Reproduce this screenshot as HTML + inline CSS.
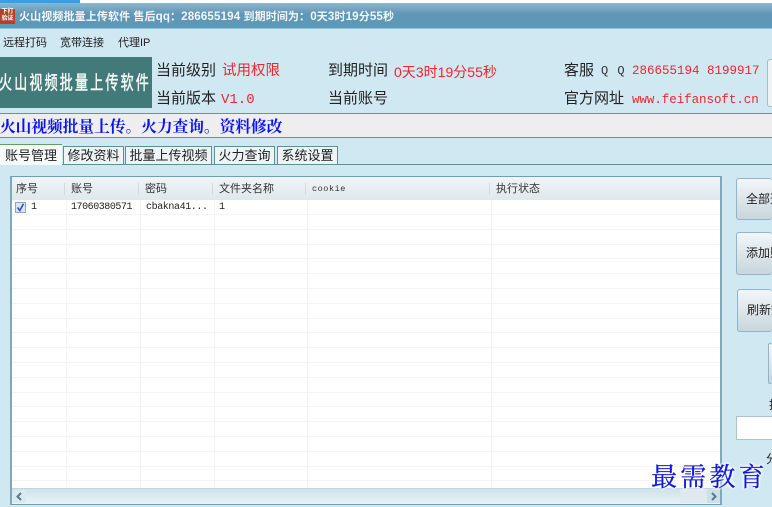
<!DOCTYPE html>
<html><head><meta charset="utf-8">
<style>
html,body{margin:0;padding:0}
body{width:772px;height:507px;overflow:hidden;position:relative;background:#d0e8f2;font-family:"Liberation Sans","Noto Sans CJK SC",sans-serif;color:#222}
div{position:absolute;box-sizing:border-box;white-space:nowrap}
.s{font-family:"Liberation Mono","Noto Serif CJK SC",monospace}
.l{font-size:15px;line-height:18px;color:#222}
.m{font-size:11px;line-height:14px;color:#222}
.r{color:#f0242c}
.h{font-size:11px;line-height:14px;color:#333;top:182px}
.tab{top:146px;height:18px;background:#eef3f3;border:1px solid #5f8f94;border-bottom:none;font-size:13px;line-height:17px;text-align:center;color:#222}
.btn{background:linear-gradient(#f2f6f8,#c8d6dd);border:1px solid #8fb5c8;border-radius:3px;font-size:12px;line-height:40px;overflow:hidden;color:#222;border-right:none;padding-left:9px}
.hl{left:12px;width:708px;height:1px;background:#f3f4f4}
.vl{top:200px;width:1px;height:288px;background:#f3f4f4}
</style></head><body>
<div style="left:0;top:0;width:772px;height:3px;background:#fff"></div>
<div style="left:0;top:0;width:80px;height:3px;background:#3a9fe0"></div>
<div style="left:0;top:3px;width:772px;height:26px;background:linear-gradient(#8db5cc,#5f97b7 45%,#5f97b7);border-bottom:1px solid #8cc8dc"></div>
<div style="left:0;top:9px;width:15px;height:15px;background:#b5402a;color:#fff;font-size:6px;line-height:7px;text-align:center;font-weight:bold;white-space:normal">下打<br>验证</div>
<div style="left:19px;top:9px;font-size:11px;line-height:15px;font-weight:bold;color:#f2f6f8;letter-spacing:.12px">火山视频批量上传软件 售后<span style="font-size:11.6px">qq</span>：<span style="font-size:11.6px">286655194</span> 到期时间为：<span style="font-size:11.6px">0</span>天<span style="font-size:11.6px">3</span>时<span style="font-size:11.6px">19</span>分<span style="font-size:11.6px">55</span>秒</div>

<div class="m" style="left:3px;top:36px">远程打码</div>
<div class="m" style="left:60px;top:36px">宽带连接</div>
<div class="m" style="left:118px;top:36px">代理IP</div>

<div style="left:0;top:57px;width:152px;height:51px;background:#417a78;overflow:hidden"></div>
<div style="left:-1px;top:74px;width:153px;color:#f4f8f6;font-size:13px;line-height:18px;letter-spacing:2.2px;-webkit-text-stroke:.35px #f4f8f6;transform:scaleY(1.45);overflow:hidden">火山视频批量上传软件</div>

<div class="l" style="left:156px;top:62px">当前级别</div>
<div class="l r" style="left:222px;top:62px;font-size:14.5px">试用权限</div>
<div class="l" style="left:156px;top:90px">当前版本</div>
<div class="s r" style="left:221px;top:91px;font-size:14px;line-height:18px">V1.0</div>
<div class="l" style="left:328px;top:62px">到期时间</div>
<div class="r" style="left:394px;top:63px;font-size:14px;line-height:18px;letter-spacing:.02px">0天3时19分55秒</div>
<div class="l" style="left:328px;top:90px">当前账号</div>
<div class="l" style="left:564px;top:62px">客服</div>
<div class="s" style="left:601px;top:62px;font-size:12px;line-height:18px;color:#333;letter-spacing:1px">Q Q</div>
<div class="s r" style="left:632px;top:62px;font-size:12.5px;line-height:18px">286655194 8199917</div>
<div class="l" style="left:564px;top:90px">官方网址</div>
<div class="s r" style="left:632px;top:91px;font-size:12.5px;line-height:18px;letter-spacing:-.05px">www.feifansoft.cn</div>
<div style="left:767px;top:59px;width:6px;height:48px;background:#eef3f5;border:1px solid #a9bcc5;border-right:none;border-radius:3px 0 0 3px"></div>

<div style="left:0;top:113px;width:772px;height:25px;background:#eeeeee;border-top:1px solid #7c8a8c;border-bottom:1px solid #7c8a8c"></div>
<div style="left:0;top:116px;font-size:15.7px;line-height:20px;font-weight:bold;color:#0a14f0;font-family:'Noto Serif CJK SC',serif">火山视频批量上传。火力查询。资料修改</div>

<div style="left:0;top:164px;width:772px;height:1px;background:#5f9099"></div>
<div class="tab" style="left:0;top:144px;width:62px;height:21px;background:#f6f9f9;border:none;border-top:1px solid #5fa05f;line-height:22px">账号管理</div>
<div class="tab" style="left:63px;width:61px">修改资料</div>
<div class="tab" style="left:125px;width:87px">批量上传视频</div>
<div class="tab" style="left:214px;width:61px">火力查询</div>
<div class="tab" style="left:277px;width:61px">系统设置</div>

<div style="left:10px;top:176px;width:712px;height:329px;background:#fff;border:1px solid #6f9fb5;border-right:2px solid #7fa8bb;border-left:2px solid #7fa8bb"></div>
<div style="left:12px;top:177px;width:708px;height:23px;background:linear-gradient(#f0f5f7,#dfe8ec)"></div>
<div class="h" style="left:16px;font-size:11px">序号</div>
<div class="h" style="left:71px">账号</div>
<div class="h" style="left:145px">密码</div>
<div class="h" style="left:219px">文件夹名称</div>
<div class="h s" style="left:312px;font-size:8.5px;letter-spacing:.55px">cookie</div>
<div class="h" style="left:496px">执行状态</div>
<div style="left:64px;top:183px;width:1px;height:12px;background:#cfdbe0"></div>
<div style="left:138px;top:183px;width:1px;height:12px;background:#cfdbe0"></div>
<div style="left:212px;top:183px;width:1px;height:12px;background:#cfdbe0"></div>
<div style="left:305px;top:183px;width:1px;height:12px;background:#cfdbe0"></div>
<div style="left:489px;top:183px;width:1px;height:12px;background:#cfdbe0"></div>

<div class="vl" style="left:66px"></div>
<div class="vl" style="left:140px"></div>
<div class="vl" style="left:214px"></div>
<div class="vl" style="left:307px"></div>
<div class="vl" style="left:491px"></div>
<div class="hl" style="top:214px"></div>
<div class="hl" style="top:229px"></div>
<div class="hl" style="top:244px"></div>
<div class="hl" style="top:258px"></div>
<div class="hl" style="top:273px"></div>
<div class="hl" style="top:288px"></div>
<div class="hl" style="top:303px"></div>
<div class="hl" style="top:318px"></div>
<div class="hl" style="top:332px"></div>
<div class="hl" style="top:347px"></div>
<div class="hl" style="top:362px"></div>
<div class="hl" style="top:377px"></div>
<div class="hl" style="top:392px"></div>
<div class="hl" style="top:406px"></div>
<div class="hl" style="top:421px"></div>
<div class="hl" style="top:436px"></div>
<div class="hl" style="top:451px"></div>
<div class="hl" style="top:466px"></div>
<div class="hl" style="top:480px"></div>

<div style="left:15px;top:202px;width:11px;height:11px;background:#dbe6f2;border:1px solid #8da6bd"></div>
<svg style="position:absolute;left:15px;top:202px" width="11" height="11" viewBox="0 0 11 11"><path d="M2.5 5.5L4.8 8.5L8.5 1.8" fill="none" stroke="#2f4fd0" stroke-width="1.6"/></svg>
<div class="s" style="left:31px;top:201px;font-size:10px;line-height:14px;color:#222">1</div>
<div class="s" style="left:71px;top:201px;font-size:10px;line-height:14px;color:#222;letter-spacing:-.45px">17060380571</div>
<div class="s" style="left:146px;top:201px;font-size:10px;line-height:14px;color:#222;letter-spacing:-.4px">cbakna41...</div>
<div class="s" style="left:219px;top:201px;font-size:10px;line-height:14px;color:#222">1</div>

<div style="left:12px;top:488px;width:708px;height:16px;background:linear-gradient(#cfe2ea,#eaf3f6);border-top:1px solid #c0d7e1"></div>
<div style="left:13px;top:490px;width:13px;height:13px;background:#dde8ee"></div>
<svg style="position:absolute;left:13px;top:490px" width="13" height="13" viewBox="0 0 13 13"><path d="M8 3L4.5 6.5L8 10" fill="none" stroke="#4f7f96" stroke-width="2"/></svg>
<div style="left:680px;top:489px;width:27px;height:14px;background:#e0eaee"></div>
<div style="left:707px;top:490px;width:13px;height:13px;background:#cfdfe6"></div>
<svg style="position:absolute;left:707px;top:490px" width="13" height="13" viewBox="0 0 13 13"><path d="M5 3L8.5 6.5L5 10" fill="none" stroke="#4f7f96" stroke-width="2"/></svg>

<div class="btn" style="left:736px;top:178px;width:36px;height:42px">全部选</div>
<div class="btn" style="left:736px;top:232px;width:36px;height:43px">添加账</div>
<div class="btn" style="left:737px;top:289px;width:35px;height:43px">刷新数</div>
<div class="btn" style="left:768px;top:343px;width:4px;height:41px;padding:0"></div>
<div style="left:769px;top:398px;font-size:12px;line-height:15px;overflow:hidden;width:3px">提</div>
<div style="left:736px;top:416px;width:36px;height:24px;background:#fff;border:1px solid #a8c4d2;border-right:none"></div>
<div style="left:766px;top:452px;font-size:12px;line-height:15px;overflow:hidden;width:6px">分</div>

<div style="left:651px;top:459px;font-size:26px;line-height:34px;letter-spacing:3.2px;color:#1018e0;-webkit-text-stroke:.3px #1018e0;font-family:'Noto Serif CJK SC',serif;text-shadow:0 0 2px #fff,1px 1px 2px #fff,-1px -1px 2px #fff,1px -1px 2px #fff,-1px 1px 2px #fff">最需教育</div>
</body></html>
